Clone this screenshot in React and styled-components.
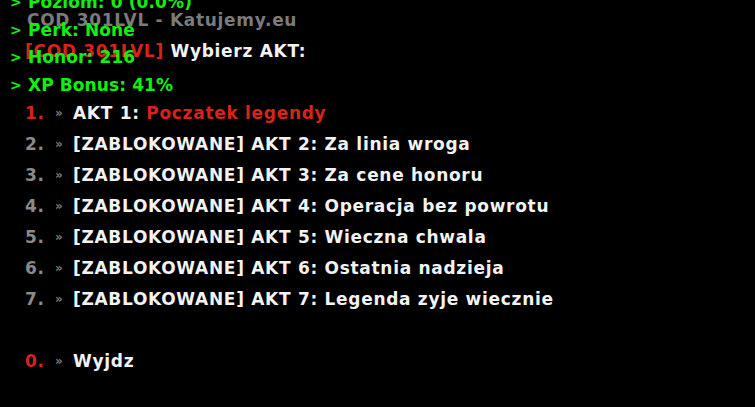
import React from 'react';
import styled, { createGlobalStyle } from 'styled-components';

const GlobalStyle = createGlobalStyle`
	html, body {
		margin: 0;
		padding: 0;
		background: #000;
	}
	body {
		width: 755px;
		height: 407px;
		overflow: hidden;
		font-family: 'DejaVu Sans', 'Verdana', sans-serif;
		font-weight: bold;
	}
`;

const Screen = styled.div`
	position: relative;
	width: 755px;
	height: 407px;
	background: #000;
	overflow: hidden;
`;

const Menu = styled.div`
	display: flex;
	flex-direction: column;
	padding: 5px 0 0 25px;
	font-size: 17px;
	line-height: 31px;
	letter-spacing: 0.7px;
`;

const Line = styled.div`
	display: flex;
	align-items: center;
	height: 31px;
	white-space: nowrap;
	color: ${(p) => p.color || '#f2f2f2'};
`;

const Title = styled(Line)`
	color: #7b7b7b;
	padding-left: 2px;
`;

const Num = styled.span`
	width: 30px;
	color: ${(p) => (p.active ? '#d8221a' : '#8a8a8a')};
`;

const Arrow = styled.span`
	width: 18px;
	font-size: 12px;
	color: #7a7a7a;
`;

const Red = styled.span`
	color: #d8221a;
`;

const Gap = styled.div`
	height: 31px;
`;

const Hud = styled.div`
	position: absolute;
	left: 10px;
	top: -11px;
	display: flex;
	flex-direction: column;
	font-size: 17px;
	line-height: 27.5px;
	color: #10f010;
	letter-spacing: 0.1px;
`;

const HudRow = styled.div`
	display: flex;
	white-space: nowrap;
`;

const Caret = styled.span`
	width: 18px;
	font-size: 14px;
`;

const acts = [
	'Za linia wroga',
	'Za cene honoru',
	'Operacja bez powrotu',
	'Wieczna chwala',
	'Ostatnia nadzieja',
	'Legenda zyje wiecznie',
];

const hud = ['Poziom: 0 (0.0%)', 'Perk: None', 'Honor: 216', 'XP Bonus: 41%'];

export default function App() {
	return (
		<Screen>
			<GlobalStyle />
			<Menu>
				<Title>COD 301LVL - Katujemy.eu</Title>
				<Line>
					<Red>[COD 301LVL]</Red>&nbsp;Wybierz AKT:
				</Line>
				<Gap />
				<Line>
					<Num active>1.</Num>
					<Arrow>»</Arrow>
					AKT 1:&nbsp;<Red>Poczatek legendy</Red>
				</Line>
				{acts.map((name, i) => (
					<Line key={name}>
						<Num>{i + 2}.</Num>
						<Arrow>»</Arrow>
						[ZABLOKOWANE] AKT {i + 2}: {name}
					</Line>
				))}
				<Gap />
				<Line>
					<Num active>0.</Num>
					<Arrow>»</Arrow>
					Wyjdz
				</Line>
			</Menu>
			<Hud>
				{hud.map((t) => (
					<HudRow key={t}>
						<Caret>&gt;</Caret>
						{t}
					</HudRow>
				))}
			</Hud>
		</Screen>
	);
}
